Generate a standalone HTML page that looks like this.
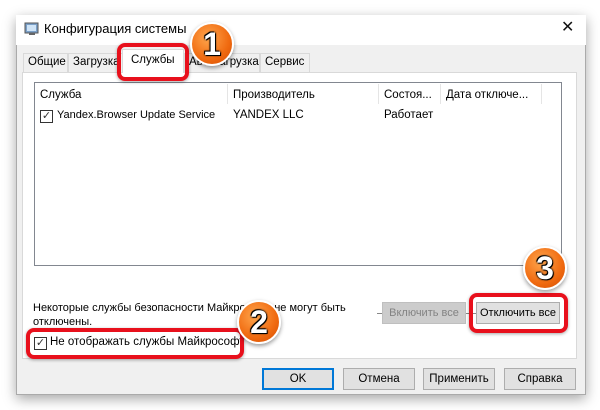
<!DOCTYPE html>
<html><head><meta charset="utf-8"><style>
*{box-sizing:border-box;margin:0;padding:0}
body{width:600px;height:410px;background:#fff;position:relative;overflow:hidden;font-family:"Liberation Sans","DejaVu Sans",sans-serif;font-size:11.5px;color:#000}
.a{position:absolute;white-space:nowrap}
.win{left:16px;top:15px;width:570px;height:380px;background:#f0f0f0;border:1px solid #aaa;box-shadow:0 4px 12px rgba(0,0,0,.35)}
.title{left:16px;top:15px;width:570px;height:30px;background:#fff}
.tab{top:53px;height:19px;border:1px solid #d9d9d9;border-bottom:none;background:#f0f0f0;padding:2px 4px;font-size:11.5px}
.panel{left:22px;top:72px;width:555px;height:287px;background:#fff;border:1px solid #d9d9d9}
.btn{height:22px;border:1px solid #adadad;background:#e1e1e1;text-align:center;line-height:20px;font-size:11.5px}
.badge{width:44px;height:44px;border-radius:50%;background:radial-gradient(circle at 40% 35%,#ffa64d,#f06a10 60%,#d24a00);border:2px solid #fff;box-shadow:0 2px 4px rgba(0,0,0,.4);color:#fff;font-weight:bold;font-size:32px;text-align:center;line-height:40px;text-shadow:0 0 2px #000,0 0 2px #000,1px 1px 0 #000,-1px -1px 0 #000}
.hl{border:4px solid #e8101c;border-radius:8px;box-shadow:0 1px 3px rgba(0,0,0,.35)}
.cb{width:13px;height:13px;border:1px solid #333;background:#fff;font-size:11px;line-height:11px;text-align:center;color:#333}
</style></head><body>
<div class="a win"></div>
<div class="a title"></div>
<svg class="a" style="left:24px;top:21px" width="16" height="16" viewBox="0 0 16 16"><rect x="1" y="2" width="13" height="10" fill="#7aa0c8" stroke="#555"/><rect x="3" y="4" width="9" height="6" fill="#cfe4f7"/><rect x="5" y="12" width="6" height="2" fill="#666"/></svg>
<div class="a" style="left:44px;top:21px;font-size:13px">Конфигурация системы</div>
<div class="a" style="left:561px;top:17px;font-size:16px;color:#111">✕</div>
<div class="a tab" style="left:23px;width:45px">Общие</div>
<div class="a tab" style="left:68px;width:56px">Загрузка</div>
<div class="a tab" style="left:184px;width:76px">Автозагрузка</div>
<div class="a tab" style="left:260px;width:50px">Сервис</div>
<div class="a panel"></div>
<div class="a" style="left:122px;top:49px;width:62px;height:24px;background:#fff;border:1px solid #d9d9d9;border-bottom:none;padding:4px 8px">Службы</div>
<div class="a" style="left:34px;top:82px;width:528px;height:184px;background:#fff;border:1px solid #828790"></div>
<div class="a" style="left:40px;top:89px">Служба</div>
<div class="a" style="left:227px;top:84px;width:1px;height:20px;background:#e5e5e5"></div>
<div class="a" style="left:233px;top:89px">Производитель</div>
<div class="a" style="left:378px;top:84px;width:1px;height:20px;background:#e5e5e5"></div>
<div class="a" style="left:384px;top:89px">Состоя...</div>
<div class="a" style="left:440px;top:84px;width:1px;height:20px;background:#e5e5e5"></div>
<div class="a" style="left:446px;top:89px">Дата отключе...</div>
<div class="a" style="left:541px;top:84px;width:1px;height:20px;background:#e5e5e5"></div>
<div class="a cb" style="left:40px;top:110px">✓</div>
<div class="a" style="left:57px;top:109px;font-size:11px">Yandex.Browser Update Service</div>
<div class="a" style="left:233px;top:109px">YANDEX LLC</div>
<div class="a" style="left:384px;top:109px">Работает</div>
<div class="a" style="left:33px;top:301px;line-height:14px;font-size:11px">Некоторые службы безопасности Майкрософт не могут быть<br>отключены.</div>
<div class="a" style="left:377px;top:313px;width:5px;height:1px;background:#888"></div>
<div class="a btn" style="left:382px;top:302px;width:84px;background:#ccc;border-color:#bfbfbf;color:#838383;font-size:11px">Включить все</div>
<div class="a" style="left:466px;top:313px;width:10px;height:1px;background:#888"></div>
<div class="a btn" style="left:476px;top:302px;width:84px;font-size:11px">Отключить все</div>
<div class="a cb" style="left:34px;top:337px">✓</div>
<div class="a" style="left:50px;top:336px;font-size:11.5px">Не отображать службы Майкрософт</div>
<div class="a btn" style="left:262px;top:368px;width:72px;border:2px solid #0078d7;line-height:18px">OK</div>
<div class="a btn" style="left:343px;top:368px;width:72px">Отмена</div>
<div class="a btn" style="left:423px;top:368px;width:72px">Применить</div>
<div class="a btn" style="left:504px;top:368px;width:72px">Справка</div>
<div class="a hl" style="left:117px;top:43px;width:72px;height:38px"></div>
<div class="a hl" style="left:26px;top:328px;width:218px;height:31px"></div>
<div class="a hl" style="left:469px;top:293px;width:99px;height:40px"></div>
<div class="a badge" style="left:190px;top:22px">1</div>
<div class="a badge" style="left:237px;top:300px">2</div>
<div class="a badge" style="left:523px;top:246px">3</div>
</body></html>
